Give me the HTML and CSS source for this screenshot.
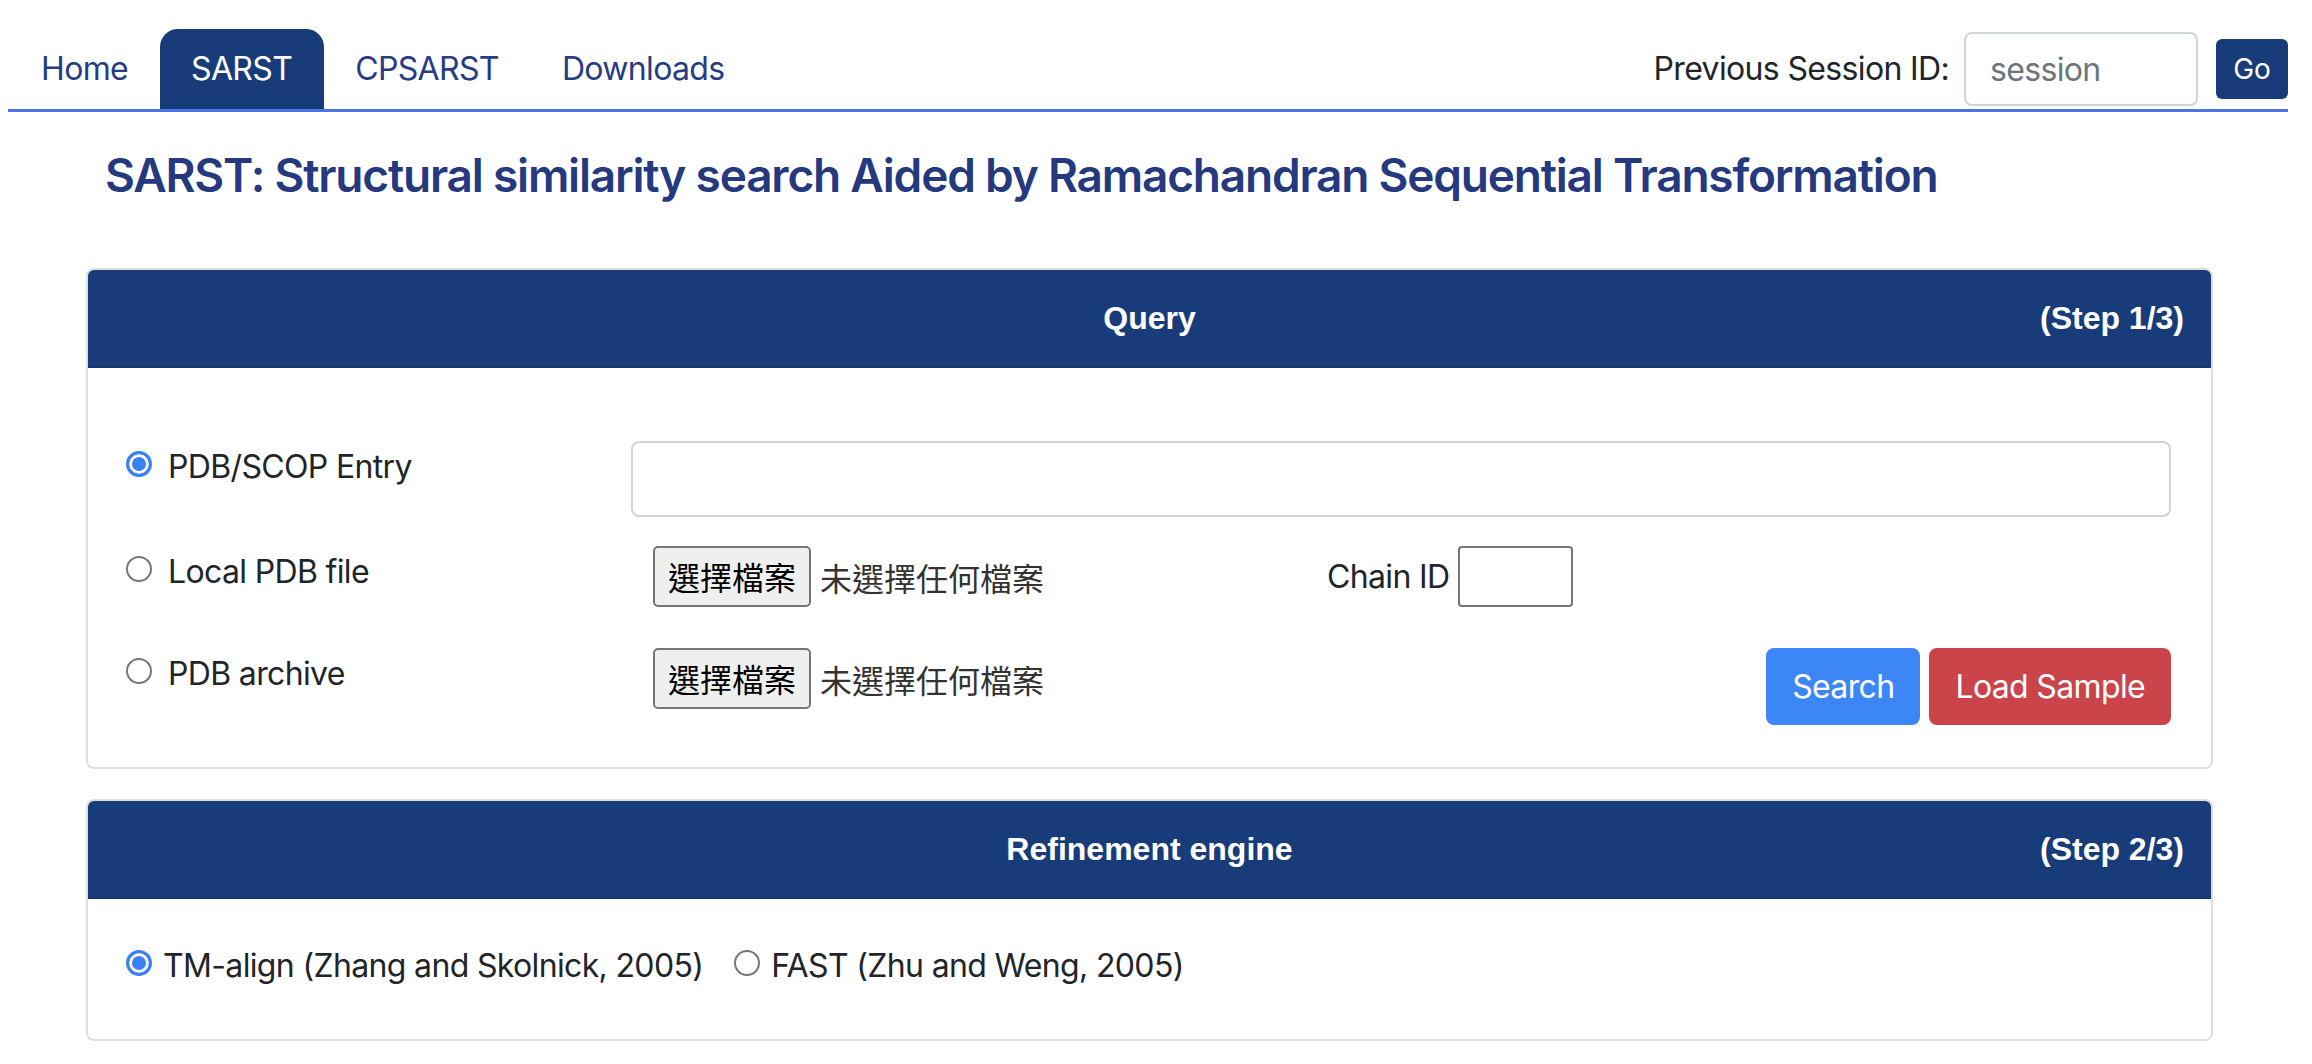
FILE: index.html
```html
<!DOCTYPE html>
<html lang="zh-Hant">
<head>
<meta charset="utf-8">
<title>SARST</title>
<link rel="stylesheet" href="styles.css">
</head>
<body>
<nav class="topnav">
  <ul class="tabs">
    <li><a class="tab">Home</a></li>
    <li><a class="tab active">SARST</a></li>
    <li><a class="tab">CPSARST</a></li>
    <li><a class="tab">Downloads</a></li>
  </ul>
  <form class="session">
    <label class="session-label">Previous Session ID:</label>
    <input class="session-input" type="text" placeholder="session">
    <button class="btn-go" type="button">Go</button>
  </form>
</nav>

<main class="page">
  <h3 class="title">SARST: Structural similarity search Aided by Ramachandran Sequential Transformation</h3>

  <section class="card">
    <div class="card-header">
      <span></span>
      <span class="card-title">Query</span>
      <span class="step">(Step 1/3)</span>
    </div>
    <div class="card-body query-body">
      <div class="qrow r1">
        <label class="opt"><input type="radio" name="src" checked><span>PDB/SCOP Entry</span></label>
        <div class="field"><input class="text-input" type="text"></div>
      </div>
      <div class="qrow r2">
        <label class="opt"><input type="radio" name="src"><span>Local PDB file</span></label>
        <div class="field field-file">
          <div class="file"><span class="file-btn">選擇檔案</span><span class="file-none">未選擇任何檔案</span></div>
          <div class="chain"><span class="chain-label">Chain ID</span><input class="chain-input" type="text"></div>
        </div>
      </div>
      <div class="qrow r3">
        <label class="opt"><input type="radio" name="src"><span>PDB archive</span></label>
        <div class="field field-actions">
          <div class="file"><span class="file-btn">選擇檔案</span><span class="file-none">未選擇任何檔案</span></div>
          <div class="actions">
            <button class="btn btn-search" type="button">Search</button>
            <button class="btn btn-sample" type="button">Load Sample</button>
          </div>
        </div>
      </div>
    </div>
  </section>

  <section class="card">
    <div class="card-header">
      <span></span>
      <span class="card-title">Refinement engine</span>
      <span class="step">(Step 2/3)</span>
    </div>
    <div class="card-body engine-body">
      <label class="opt opt-inline"><input type="radio" name="eng" checked><span>TM-align (Zhang and Skolnick, 2005)</span></label>
      <label class="opt opt-inline"><input type="radio" name="eng"><span>FAST (Zhu and Weng, 2005)</span></label>
    </div>
  </section>
</main>
</body>
</html>
```

FILE: styles.css
```css
* { box-sizing: border-box; }

html, body {
  margin: 0;
  padding: 0;
  background: #fff;
}

body {
  font-family: "Inter", "Noto Sans CJK TC", sans-serif;
  font-size: 32px;
  line-height: 48px;
  letter-spacing: -0.65px;
  color: #212529;
}

/* ---------- top navigation ---------- */
.topnav {
  display: flex;
  align-items: center;
  justify-content: space-between;
  margin: 0 24px 0 8px;
  padding-top: 29px;
  border-bottom: 3px solid #4a75e6;
}

.tabs {
  display: flex;
  list-style: none;
  margin: 0;
  padding: 0;
}

.tab {
  display: block;
  padding: 16px 31.5px;
  color: #263c84;
  line-height: 48px;
  border-radius: 18px 18px 0 0;
}

.tabs li:first-child .tab { padding-left: 33px; }

.tab.active {
  background: #183c79;
  color: #fff;
}

.session {
  display: flex;
  align-items: center;
  margin: 0;
}

.session-label {
  color: #212529;
  margin-right: 15px;
}

.session-input {
  width: 234px;
  height: 74px;
  padding: 0 24px;
  font: inherit;
  letter-spacing: -0.65px;
  color: #495057;
  border: 2px solid #ced4da;
  border-radius: 8px;
  outline: none;
}

.session-input::placeholder { color: #6c757d; }

.btn-go {
  margin-left: 18px;
  width: 72px;
  height: 60px;
  padding: 0;
  font-family: "Inter", sans-serif;
  font-size: 28px;
  color: #fff;
  background: #183c79;
  border: none;
  border-radius: 6px;
}

/* ---------- page ---------- */
.page {
  padding: 0 99px 0 86px;
}

.title {
  margin: 30px 0 60px 19px;
  font-size: 46px;
  line-height: 66px;
  font-weight: 600;
  color: #25397f;
  letter-spacing: -1.2px;
  white-space: nowrap;
}

/* ---------- cards ---------- */
.card {
  border: 2px solid #dedede;
  border-radius: 8px;
  overflow: hidden;
  margin-bottom: 30px;
}

.card-header {
  display: grid;
  grid-template-columns: 1fr auto 1fr;
  align-items: center;
  padding: 24px 27px;
  background: #183c79;
  border-bottom: 2px solid #163670;
  color: #fff;
  font-family: "Liberation Sans", Arial, sans-serif;
  font-weight: bold;
  font-size: 32px;
  line-height: 48px;
  letter-spacing: 0;
}

.step { justify-self: end; }

.card-body {
  padding: 40px;
}

.query-body {
  padding: 73px 40px 42px;
}

/* ---------- radio options ---------- */
.opt {
  display: flex;
  align-items: center;
  line-height: 46px;
  color: #212529;
}

.qrow .opt { padding-top: 3px; }

.opt input {
  appearance: none;
  -webkit-appearance: none;
  flex: none;
  width: 26px;
  height: 26px;
  margin: 0 16px 6px -2px;
  border: 2px solid #767676;
  border-radius: 50%;
  background: #fff;
}

.opt input:checked {
  border: 3px solid #3b80f5;
  background: #3b80f5;
  box-shadow: inset 0 0 0 3px #fff;
}

/* ---------- query rows ---------- */
.qrow {
  display: grid;
  grid-template-columns: 503px 1fr;
  align-items: start;
}

.r1 { margin-bottom: 29px; }
.r2 { margin-bottom: 41px; }

.text-input {
  display: block;
  width: 100%;
  height: 76px;
  border: 2px solid #ced4da;
  border-radius: 8px;
  font: inherit;
  outline: none;
}

.field-file,
.field-actions {
  display: flex;
  align-items: flex-start;
}

.field-actions { justify-content: space-between; }

.file {
  display: flex;
  align-items: center;
  padding-left: 22px;
}

.field-file .file { width: 696px; }

.file-btn {
  height: 61px;
  padding: 0 13px;
  line-height: 57px;
  font-family: "Noto Sans CJK TC", sans-serif;
  font-size: 32px;
  letter-spacing: 0;
  color: #000;
  background: #efefef;
  border: 2px solid #767676;
  border-radius: 5px;
}

.file-none {
  margin-left: 9px;
  font-family: "Noto Sans CJK TC", sans-serif;
  letter-spacing: 0;
  color: #333;
}

.chain {
  display: flex;
  align-items: center;
}

.chain-label { margin-right: 9px; }

.chain-input {
  width: 115px;
  height: 61px;
  border: 2px solid #767676;
  border-radius: 4px;
  font: inherit;
  outline: none;
}

.actions {
  display: flex;
  gap: 9px;
}

.btn {
  height: 77px;
  padding: 0 24px;
  font-family: "Inter", sans-serif;
  font-size: 32px;
  line-height: 48px;
  letter-spacing: -0.65px;
  color: #fff;
  border: 2px solid transparent;
  border-radius: 8px;
}

.btn-search { background: #3d86f8; border-color: #3d86f8; }
.btn-sample { background: #cb444a; border-color: #cb444a; }

/* ---------- engine ---------- */
.engine-body {
  display: flex;
  align-items: center;
  padding: 44px 40px 50px 40px;
}

.opt-inline input { margin-right: 11px; }
.opt-inline + .opt-inline { margin-left: 33px; }
```
